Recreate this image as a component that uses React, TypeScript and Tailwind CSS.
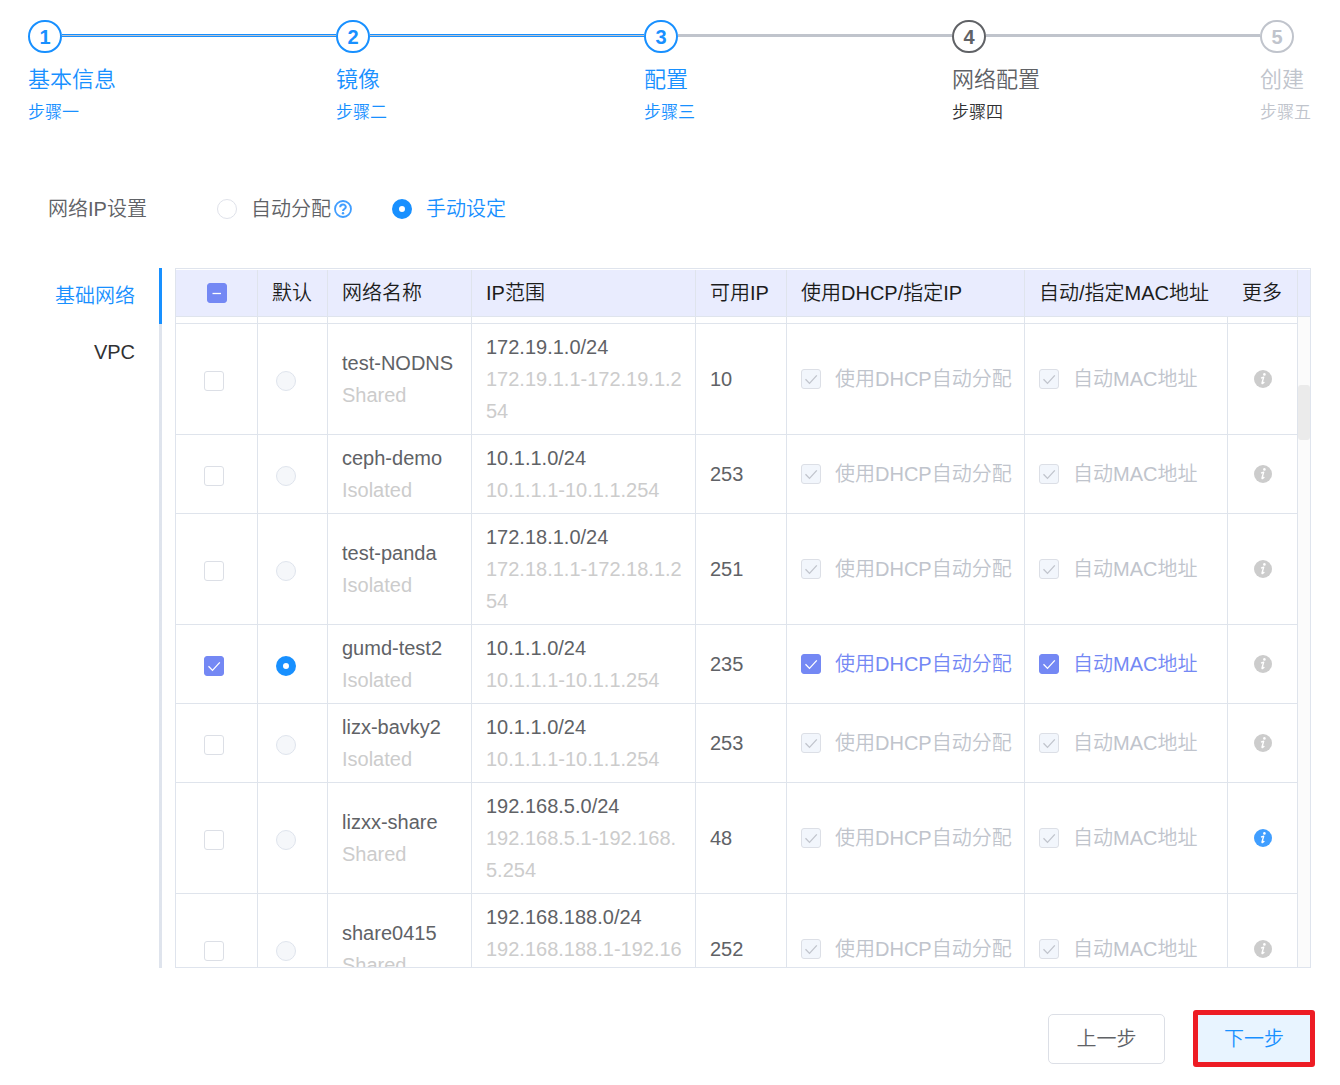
import React, { useState } from 'react';
import clsx from 'clsx';

type StepState = 'done' | 'current' | 'wait';

const steps: { title: string; sub: string; state: StepState }[] = [
  { title: '基本信息', sub: '步骤一', state: 'done' },
  { title: '镜像', sub: '步骤二', state: 'done' },
  { title: '配置', sub: '步骤三', state: 'done' },
  { title: '网络配置', sub: '步骤四', state: 'current' },
  { title: '创建', sub: '步骤五', state: 'wait' },
];

type Network = {
  name: string;
  kind: string;
  cidr: string;
  range: string;
  free: number;
  selected?: boolean;
  info?: boolean;
};

const networks: Network[] = [
  { name: 'test-NODNS', kind: 'Shared', cidr: '172.19.1.0/24', range: '172.19.1.1-172.19.1.254', free: 10 },
  { name: 'ceph-demo', kind: 'Isolated', cidr: '10.1.1.0/24', range: '10.1.1.1-10.1.1.254', free: 253 },
  { name: 'test-panda', kind: 'Isolated', cidr: '172.18.1.0/24', range: '172.18.1.1-172.18.1.254', free: 251 },
  { name: 'gumd-test2', kind: 'Isolated', cidr: '10.1.1.0/24', range: '10.1.1.1-10.1.1.254', free: 235, selected: true },
  { name: 'lizx-bavky2', kind: 'Isolated', cidr: '10.1.1.0/24', range: '10.1.1.1-10.1.1.254', free: 253 },
  { name: 'lizxx-share', kind: 'Shared', cidr: '192.168.5.0/24', range: '192.168.5.1-192.168.5.254', free: 48, info: true },
  { name: 'share0415', kind: 'Shared', cidr: '192.168.188.0/24', range: '192.168.188.1-192.168.188.254', free: 252 },
];

function Steps() {
  return (
    <ol className="flex">
      {steps.map((s, i) => {
        const last = i === steps.length - 1;
        return (
          <li
            key={s.title}
            className={clsx(
              last ? 'shrink-0' : 'min-w-0 flex-1',
              s.state === 'done' && 'text-[#1890ff]',
              s.state === 'current' && 'text-[#606266]',
              s.state === 'wait' && 'text-[#c0c4cc]',
            )}
          >
            <div className="flex h-[33px] items-center">
              <span className="flex h-[33px] w-[34px] shrink-0 items-center justify-center rounded-full border-2 border-current text-xl leading-none font-bold">
                {i + 1}
              </span>
              {!last && (
                <span
                  className={clsx(
                    'mb-[3px] h-[3px] flex-1 bg-[#c0c4cc]',
                    s.state === 'done' && steps[i + 1].state === 'done' && 'border-y border-[#1890ff]',
                  )}
                />
              )}
            </div>
            <div className="mt-[9px] text-[22px] leading-[36px] whitespace-nowrap">{s.title}</div>
            <div className={clsx('mt-[3px] text-[17px] leading-6', s.state === 'current' && 'text-[#303133]')}>{s.sub}</div>
          </li>
        );
      })}
    </ol>
  );
}

function Checkbox({
  id,
  label,
  defaultChecked,
  disabled,
  partial,
}: {
  id: string;
  label: string;
  defaultChecked?: boolean;
  disabled?: boolean;
  partial?: boolean;
}) {
  return (
    <span className="relative inline-flex size-5 shrink-0">
      <input
        id={id}
        type="checkbox"
        aria-label={label}
        defaultChecked={defaultChecked}
        disabled={disabled}
        className="peer size-5 appearance-none rounded-[3px] border border-[#dcdfe6] bg-white checked:border-[#7488f4] checked:bg-[#7488f4] disabled:border-[#dcdfe6] disabled:bg-[#f2f6fc]"
      />
      <svg
        viewBox="0 0 20 20"
        fill="none"
        strokeWidth="1.3"
        className="pointer-events-none absolute inset-0 hidden size-5 stroke-white peer-checked:block peer-disabled:stroke-[#c0c4cc]"
      >
        {partial ? <path d="M5.5 10.5h8.5" /> : <path d="M4.5 10.2l4 4.2 7.3-8" />}
      </svg>
    </span>
  );
}

const radioClass =
  'size-5 shrink-0 appearance-none rounded-full border border-[#dfe2ea] bg-white checked:border-[7px] checked:border-[#1890ff] disabled:border-[#dfe4ed] disabled:bg-[#f5f7fa]';

function InfoIcon() {
  return (
    <svg viewBox="0 0 18 18" className="size-[18px]" fill="currentColor">
      <circle cx="9" cy="9" r="9" />
      <circle cx="10.4" cy="4.4" r="1.3" fill="#fff" />
      <path
        d="M7 8.1c1-.3 1.8-.8 2.7-1L8.1 12.6c-.4 1.5.8 1 2.2-.6"
        fill="none"
        stroke="#fff"
        strokeWidth="1.4"
        strokeLinejoin="round"
      />
    </svg>
  );
}

function HelpIcon() {
  return (
    <svg viewBox="0 0 18 18" className="size-[18px]" fill="none" stroke="#409eff">
      <circle cx="9" cy="9" r="8" strokeWidth="1.8" />
      <path d="M6.2 7.2c0-3.6 5.6-3.4 5.6-.2 0 2-2.8 2-2.8 4" strokeWidth="2" />
      <circle cx="9" cy="13.3" r="1.2" fill="#409eff" stroke="none" />
    </svg>
  );
}

const th =
  'h-[47px] border-b border-[#dfe4ed] bg-[#e9ecfe] px-[14px] text-left font-[350] whitespace-nowrap text-[#1c1c1c]';
const td = 'border-r border-b border-[#dfe4ec] px-[14px] py-[7px]';

function OptionCell({ id, text, on }: { id: string; text: string; on?: boolean }) {
  return (
    <td className={td}>
      <div className="flex items-center gap-[14px]">
        <Checkbox id={id} label={text} defaultChecked disabled={!on} />
        <label htmlFor={id} className={clsx('whitespace-nowrap', on ? 'text-[#7488f4]' : 'text-[#c0c4cc]')}>
          {text}
        </label>
      </div>
    </td>
  );
}

function NetworkTable() {
  return (
    <div className="flex h-[700px] min-w-0 flex-1 overflow-hidden border border-[#dfe4ed] pt-px">
      <table className="w-full table-fixed border-separate border-spacing-0 self-start leading-8">
        <colgroup>
          <col className="w-[82px]" />
          <col className="w-[70px]" />
          <col className="w-[144px]" />
          <col className="w-[224px]" />
          <col className="w-[91px]" />
          <col />
          <col className="w-[203px]" />
          <col className="w-[70px]" />
        </colgroup>
        <thead>
          <tr>
            <th className={clsx(th, 'border-r')}>
              <div className="flex justify-center">
                <Checkbox id="all" label="全选" defaultChecked partial />
              </div>
            </th>
            <th className={clsx(th, 'border-r')}>默认</th>
            <th className={clsx(th, 'border-r')}>网络名称</th>
            <th className={clsx(th, 'border-r')}>IP范围</th>
            <th className={clsx(th, 'border-r')}>可用IP</th>
            <th className={clsx(th, 'border-r')}>使用DHCP/指定IP</th>
            <th className={th}>自动/指定MAC地址</th>
            <th className={clsx(th, 'border-r')}>更多</th>
          </tr>
        </thead>
        <tbody>
          <tr aria-hidden="true">
            {[0, 1, 2, 3, 4, 5, 6, 7].map((c) => (
              <td key={c} className="h-[7px] border-r border-b border-[#dfe4ec] p-0" />
            ))}
          </tr>
          {networks.map((n) => (
            <tr key={n.name}>
              <td className={td}>
                <div className="flex pt-[3px] pl-[14px]">
                  <Checkbox id={`pick-${n.name}`} label={n.name} defaultChecked={n.selected} />
                </div>
              </td>
              <td className={td}>
                <div className="flex pt-[3px] pl-1">
                  <input
                    type="radio"
                    name="default-network"
                    aria-label={`默认 ${n.name}`}
                    defaultChecked={n.selected}
                    disabled={!n.selected}
                    className={radioClass}
                  />
                </div>
              </td>
              <td className={td}>
                <div>{n.name}</div>
                <div className="text-[#cccccc]">{n.kind}</div>
              </td>
              <td className="border-r border-b border-[#dfe4ec] py-[7px] pr-[10px] pl-[14px]">
                <div>{n.cidr}</div>
                <div className="break-all text-[#cccccc]">{n.range}</div>
              </td>
              <td className={td}>{n.free}</td>
              <OptionCell id={`dhcp-${n.name}`} text="使用DHCP自动分配" on={n.selected} />
              <OptionCell id={`mac-${n.name}`} text="自动MAC地址" on={n.selected} />
              <td className={td}>
                <button
                  type="button"
                  aria-label={`${n.name} 更多`}
                  className={clsx('mx-auto block', n.info ? 'text-[#409eff]' : 'text-[#cccccc]')}
                >
                  <InfoIcon />
                </button>
              </td>
            </tr>
          ))}
        </tbody>
      </table>
      <div className="flex w-3 shrink-0 flex-col">
        <div className="h-[47px] border-b border-[#dfe4ed] bg-[#e9ecfe]" />
        <div className="flex-1 bg-[#fbfbfb] pt-[68px]">
          <div className="h-[55px] rounded-[3px] bg-[#ebebeb]" />
        </div>
      </div>
    </div>
  );
}

export default function App() {
  const [mode, setMode] = useState<'auto' | 'manual'>('manual');
  const [tab, setTab] = useState('基础网络');

  return (
    <main className="bg-white pt-5 pr-[25px] pb-[18px] pl-7 font-['Liberation_Sans','Noto_Sans_CJK_SC',sans-serif] text-xl font-[350] text-[#606266]">
      <div className="pr-1">
        <Steps />
      </div>

      <fieldset className="mt-[68px] flex h-8 items-center pl-5">
        <legend className="float-left w-[169px] leading-8">网络IP设置</legend>
        <div className="flex items-center">
          <input
            id="auto"
            type="radio"
            name="mode"
            checked={mode === 'auto'}
            onChange={() => setMode('auto')}
            className={radioClass}
          />
          <label htmlFor="auto" className={clsx('ml-[14px] leading-8', mode === 'auto' && 'text-[#1890ff]')}>
            自动分配
          </label>
          <button type="button" aria-label="说明" className="ml-[3px]">
            <HelpIcon />
          </button>
        </div>
        <div className="ml-10 flex items-center">
          <input
            id="manual"
            type="radio"
            name="mode"
            checked={mode === 'manual'}
            onChange={() => setMode('manual')}
            className={radioClass}
          />
          <label htmlFor="manual" className={clsx('ml-[14px] leading-8', mode === 'manual' && 'text-[#1890ff]')}>
            手动设定
          </label>
        </div>
      </fieldset>

      <div className="mt-[43px] flex gap-[13px] pr-1">
        <div role="tablist" className="flex w-[134px] shrink-0 flex-col bg-linear-to-l from-[#dfe4ed] from-[3px] to-transparent to-[3px]">
          {['基础网络', 'VPC'].map((t) => (
            <button
              key={t}
              type="button"
              role="tab"
              aria-selected={tab === t}
              onClick={() => setTab(t)}
              className={clsx(
                'h-14 border-r-[3px] pr-6 text-right',
                tab === t ? 'border-[#1890ff] text-[#1890ff]' : 'border-transparent text-[#303133]',
              )}
            >
              {t}
            </button>
          ))}
        </div>
        <NetworkTable />
      </div>

      <div className="mt-[42px] flex items-center justify-end gap-7">
        <button type="button" className="h-[50px] w-[117px] rounded-[5px] border border-[#dcdfe6] bg-white">
          上一步
        </button>
        <button
          type="button"
          className="h-[57px] w-[122px] rounded-[3px] border-[5px] border-[#ed1c24] bg-[#e8f4ff] text-[#1890ff]"
        >
          下一步
        </button>
      </div>
    </main>
  );
}
